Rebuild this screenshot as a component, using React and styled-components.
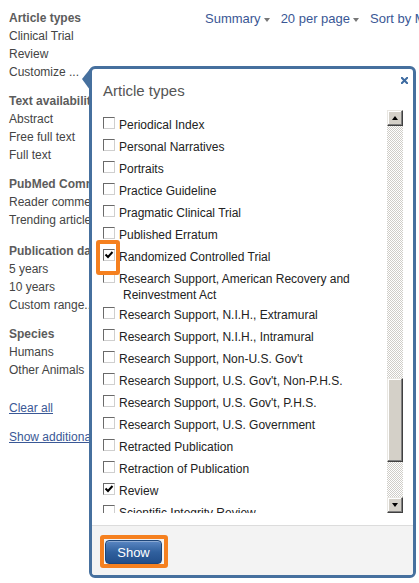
import React from 'react';
import styled, { createGlobalStyle } from 'styled-components';

const GlobalStyle = createGlobalStyle`
    html, body {
        margin: 0;
        padding: 0;
        background: #fff;
    }
    body {
        font-family: "Liberation Sans", Arial, sans-serif;
    }
`;

const sideGroups = [
    { title: 'Article types', items: ['Clinical Trial', 'Review', 'Customize ...'] },
    { title: 'Text availability', items: ['Abstract', 'Free full text', 'Full text'] },
    { title: 'PubMed Commons', items: ['Reader comments', 'Trending articles'], gap: 13 },
    { title: 'Publication dates', items: ['5 years', '10 years', 'Custom range...'] },
    { title: 'Species', items: ['Humans', 'Other Animals'] },
];

const articleTypes = [
    { label: 'Periodical Index' },
    { label: 'Personal Narratives' },
    { label: 'Portraits' },
    { label: 'Practice Guideline' },
    { label: 'Pragmatic Clinical Trial' },
    { label: 'Published Erratum' },
    { label: 'Randomized Controlled Trial', checked: true, marked: true },
    { label: 'Research Support, American Recovery and Reinvestment Act' },
    { label: 'Research Support, N.I.H., Extramural' },
    { label: 'Research Support, N.I.H., Intramural' },
    { label: "Research Support, Non-U.S. Gov't" },
    { label: "Research Support, U.S. Gov't, Non-P.H.S." },
    { label: "Research Support, U.S. Gov't, P.H.S." },
    { label: 'Research Support, U.S. Government' },
    { label: 'Retracted Publication' },
    { label: 'Retraction of Publication' },
    { label: 'Review', checked: true },
    { label: 'Scientific Integrity Review' },
];

const Check = () => (
    <svg width="10" height="10" viewBox="0 0 10 10">
        <path d="M1.5 4.5 L4 7 L8.5 2" fill="none" stroke="#000" strokeWidth="2" />
    </svg>
);

const CloseIcon = () => (
    <svg width="7" height="7" viewBox="0 0 7 7">
        <path d="M0.8 0.8 L6.2 6.2 M6.2 0.8 L0.8 6.2" stroke="#3d6ba1" strokeWidth="2" strokeLinecap="square" />
    </svg>
);

class App extends React.Component {
    render() {
        return (
            <Page>
                <GlobalStyle />
                <Sidebar>
                    {sideGroups.map(g => (
                        <Group key={g.title} $gap={g.gap}>
                            <GroupTitle>{g.title}</GroupTitle>
                            {g.items.map(i => <GroupItem key={i}>{i}</GroupItem>)}
                        </Group>
                    ))}
                    <SideLink $gap={20}>Clear all</SideLink>
                    <SideLink $gap={11}>Show additional filters</SideLink>
                </Sidebar>
                <Main>
                    <Toolbar>
                        <ToolItem>Summary<Caret /></ToolItem>
                        <ToolItem>20 per page<Caret /></ToolItem>
                        <ToolItem>Sort by Most Recent<Caret /></ToolItem>
                    </Toolbar>
                    <ResultsTitle>Search results</ResultsTitle>
                </Main>

                <Popup>
                    <Close><CloseIcon /></Close>
                    <PopupTitle>Article types</PopupTitle>
                    <ListArea>
                        <Items>
                            {articleTypes.map(t => (
                                <Row key={t.label}>
                                    {t.marked ? (
                                        <Ring $t={7} $r={5} $b={6} $l={7}>
                                            <Box>{t.checked && <Check />}</Box>
                                        </Ring>
                                    ) : (
                                        <Box>{t.checked && <Check />}</Box>
                                    )}
                                    <Label>{t.label}</Label>
                                </Row>
                            ))}
                        </Items>
                        <Scrollbar>
                            <ScrollButton><Arrow $up /></ScrollButton>
                            <Track>
                                <Thumb $offset={252} $size={84} />
                            </Track>
                            <ScrollButton><Arrow /></ScrollButton>
                        </Scrollbar>
                    </ListArea>
                    <Footer>
                        <Ring $t={5} $r={6} $b={4} $l={5}>
                            <ShowButton>Show</ShowButton>
                        </Ring>
                    </Footer>
                </Popup>
            </Page>
        );
    }
}

export default App;

const Page = styled.div`
    position: relative;
    width: 419px;
    height: 583px;
    overflow: hidden;
    display: flex;
`;

const Sidebar = styled.div`
    width: 196px;
    flex: none;
    box-sizing: border-box;
    padding: 9px 0 0 9px;
    font-size: 12px;
    line-height: 18px;
    white-space: nowrap;
`;

const Group = styled.div`
    margin-bottom: ${p => p.$gap || 11}px;
`;

const GroupTitle = styled.div`
    font-weight: bold;
    color: #5c5c5c;
`;

const GroupItem = styled.div`
    color: #444;
`;

const SideLink = styled.a`
    display: block;
    margin-top: ${p => p.$gap}px;
    color: #3a5896;
    text-decoration: underline;
`;

const Main = styled.div`
    flex: 1;
    padding: 10px 0 0 9px;
`;

const Toolbar = styled.div`
    display: flex;
    gap: 11px;
    font-size: 13px;
    line-height: 18px;
    white-space: nowrap;
    color: #3a5795;
`;

const ToolItem = styled.span`
    display: inline-flex;
    align-items: center;
`;

const Caret = styled.span`
    display: inline-block;
    margin-left: 3px;
    margin-top: 1px;
    border-top: 4px solid #777;
    border-left: 3.5px solid transparent;
    border-right: 3.5px solid transparent;
`;

const ResultsTitle = styled.h2`
    margin: 33px 0 0 2px;
    font-size: 18px;
    line-height: 24px;
    font-weight: normal;
    color: #985735;
`;

const Popup = styled.div`
    position: absolute;
    left: 89px;
    top: 66px;
    width: 327px;
    height: 512px;
    box-sizing: border-box;
    border: 3px solid #46709e;
    border-radius: 6px;
    background: #fff;
    display: flex;
    flex-direction: column;

    &::before {
        content: '';
        position: absolute;
        left: -10px;
        top: 0;
        border-right: 8px solid #46709e;
        border-top: 10px solid transparent;
        border-bottom: 11px solid transparent;
    }
`;

const Close = styled.span`
    position: absolute;
    right: 5px;
    top: 8px;
    display: flex;
`;

const PopupTitle = styled.div`
    flex: none;
    padding: 12px 0 0 11px;
    font-size: 15px;
    line-height: 20px;
    color: #555;
`;

const ListArea = styled.div`
    flex: none;
    display: flex;
    height: 403px;
    margin-top: 9px;
    padding-right: 10px;
`;

const Items = styled.div`
    flex: 1;
    overflow: hidden;
    padding: 5px 0 0 11px;
`;

const Row = styled.div`
    display: flex;
    align-items: flex-start;
`;

const Box = styled.span`
    flex: none;
    width: 12px;
    height: 12px;
    box-sizing: border-box;
    margin: 2px 0 8px 0;
    border: 1px solid;
    border-color: #6a6a6a #cfcfcf #cfcfcf #6a6a6a;
    background: #fff;
    display: flex;
    align-items: center;
    justify-content: center;
`;

const Ring = styled.span`
    position: relative;
    display: inline-flex;
    flex: none;

    &::after {
        content: '';
        position: absolute;
        top: -${p => p.$t}px;
        right: -${p => p.$r}px;
        bottom: -${p => p.$b}px;
        left: -${p => p.$l}px;
        border: 4px solid #f5801f;
        border-radius: 3px;
        pointer-events: none;
    }
`;

const Label = styled.span`
    flex: 1;
    padding: 2px 0 2px 8px;
    text-indent: -4px;
    font-size: 12px;
    line-height: 16px;
    color: #222;
`;

const Scrollbar = styled.div`
    flex: none;
    width: 16px;
    display: flex;
    flex-direction: column;
`;

const ScrollButton = styled.div`
    flex: none;
    height: 16px;
    box-sizing: border-box;
    background: #d4d0c8;
    border: 1px solid;
    border-color: #e9e7e2 #404040 #404040 #e9e7e2;
    box-shadow: inset -1px -1px #808080, inset 1px 1px #fff;
    display: flex;
    align-items: center;
    justify-content: center;
`;

const Arrow = styled.span`
    width: 0;
    height: 0;
    border-left: 3.5px solid transparent;
    border-right: 3.5px solid transparent;
    ${p => p.$up ? 'border-bottom: 4px solid #000;' : 'border-top: 4px solid #000;'}
`;

const Track = styled.div`
    flex: 1;
    background: repeating-conic-gradient(#cfcdc8 0 25%, #fff 0 50%) 0 0 / 2px 2px;
`;

const Thumb = styled.div`
    margin-top: ${p => p.$offset}px;
    height: ${p => p.$size}px;
    box-sizing: border-box;
    background: #d4d0c8;
    border: 1px solid;
    border-color: #e9e7e2 #404040 #404040 #e9e7e2;
    box-shadow: inset -1px -1px #808080, inset 1px 1px #fff;
`;

const Footer = styled.div`
    flex: 1;
    margin-top: 12px;
    padding: 14px 0 0 13px;
    border-top: 1px solid #dcdcdc;
    background: #f3f3f3;
    border-radius: 0 0 3px 3px;
    display: flex;
    align-items: flex-start;
`;

const ShowButton = styled.button`
    width: 57px;
    height: 24px;
    padding: 0;
    border: 1px solid #1d4579;
    border-radius: 4px;
    background: linear-gradient(#5b87c3, #30609e 50%, #224e8a);
    box-shadow: inset 0 1px rgba(255, 255, 255, 0.3);
    color: #fff;
    font-family: "Liberation Sans", Arial, sans-serif;
    font-size: 13px;
    cursor: pointer;
`;
